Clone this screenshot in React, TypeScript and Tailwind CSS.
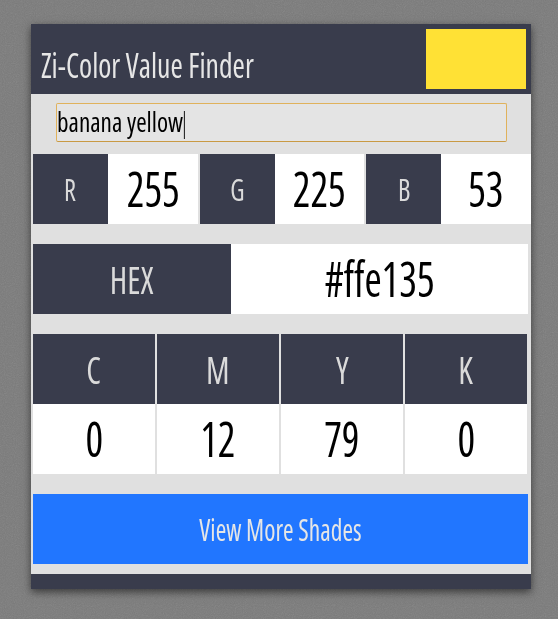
export default function App() {
  const rgb = [
    ['R', '255'],
    ['G', '225'],
    ['B', '53'],
  ];
  const cmyk = [
    ['C', '0'],
    ['M', '12'],
    ['Y', '79'],
    ['K', '0'],
  ];
  return (
    <div className="relative min-h-screen bg-[#7a7a7a] pt-[24px] pl-[31px] pb-[30px] font-['Open_Sans',sans-serif] font-stretch-condensed font-medium">
      <svg className="pointer-events-none absolute inset-0 h-full w-full" aria-hidden="true">
        <filter id="noise">
          <feTurbulence type="fractalNoise" baseFrequency="0.9" numOctaves="2" stitchTiles="stitch" />
          <feColorMatrix type="saturate" values="0" />
          <feComponentTransfer>
            <feFuncA type="linear" slope="0.18" />
          </feComponentTransfer>
        </filter>
        <rect width="100%" height="100%" filter="url(#noise)" />
      </svg>
      <div className="relative w-[500px] bg-[#e0e0e0] shadow-[0_3px_8px_rgba(0,0,0,0.55)]">
        <div className="flex h-[70px] items-start justify-between bg-[#393c4c]">
          <h1 className="mt-[21px] pl-[10px] text-[35px] leading-[40px] text-[#e6e6e6]">
            <span className="inline-block origin-left scale-x-[0.85]">Zi-Color Value Finder</span>
          </h1>
          <div className="mr-[5px] mt-[5px] h-[60px] w-[100px] bg-[#ffe135]" />
        </div>
        <div className="pt-[9px] pb-[10px]">
          <div className="mx-auto flex h-[39px] w-[451px] items-center rounded-[2px] border border-[#e0b25c] border-b-[#c99a44] bg-[#e4e4e4]">
            <span className="inline-block origin-left scale-x-[0.9] text-[28px] leading-[30px] font-normal text-black">
              banana yellow<span className="ml-[1px] inline-block h-[28px] w-[1px] align-middle bg-black" />
            </span>
          </div>
          <div className="ml-[2px] mt-[12px] flex h-[70px] gap-[2px]">
            {rgb.map(([l, v]) => (
              <div key={l} className="flex flex-1">
                <div className="flex w-[75px] items-center justify-center bg-[#393c4c] text-[31px] text-[#dadada]">
                  <span className="inline-block scale-x-[0.85]">{l}</span>
                </div>
                <div className="flex flex-1 items-center justify-center bg-white text-[49px] text-black">
                  <span className="inline-block scale-x-[0.85]">{v}</span>
                </div>
              </div>
            ))}
          </div>
          <div className="ml-[2px] mt-[20px] flex h-[70px] w-[495px]">
            <div className="flex w-[198px] items-center justify-center bg-[#393c4c] text-[39px] text-[#dadada]">
              <span className="inline-block scale-x-[0.85]">HEX</span>
            </div>
            <div className="flex flex-1 items-center justify-center bg-white text-[49px] text-black">
              <span className="inline-block scale-x-[0.85]">#ffe135</span>
            </div>
          </div>
          <div className="ml-[2px] mt-[20px] grid w-[494px] grid-cols-4 gap-x-[2px]">
            {cmyk.map(([l]) => (
              <div key={l} className="flex h-[70px] items-center justify-center bg-[#393c4c] text-[39px] text-[#dadada]">
                <span className="inline-block scale-x-[0.85]">{l}</span>
              </div>
            ))}
            {cmyk.map(([l, v]) => (
              <div key={l + 'v'} className="flex h-[70px] items-center justify-center bg-white text-[49px] text-black">
                <span className="inline-block scale-x-[0.85]">{v}</span>
              </div>
            ))}
          </div>
          <button className="ml-[2px] mt-[20px] flex h-[70px] w-[495px] items-center justify-center bg-[#2176ff] text-[30px] text-[#e6e6e6]">
            <span className="inline-block scale-x-[0.85]">View More Shades</span>
          </button>
        </div>
        <div className="h-[15px] bg-[#393c4c]" />
      </div>
    </div>
  );
}
